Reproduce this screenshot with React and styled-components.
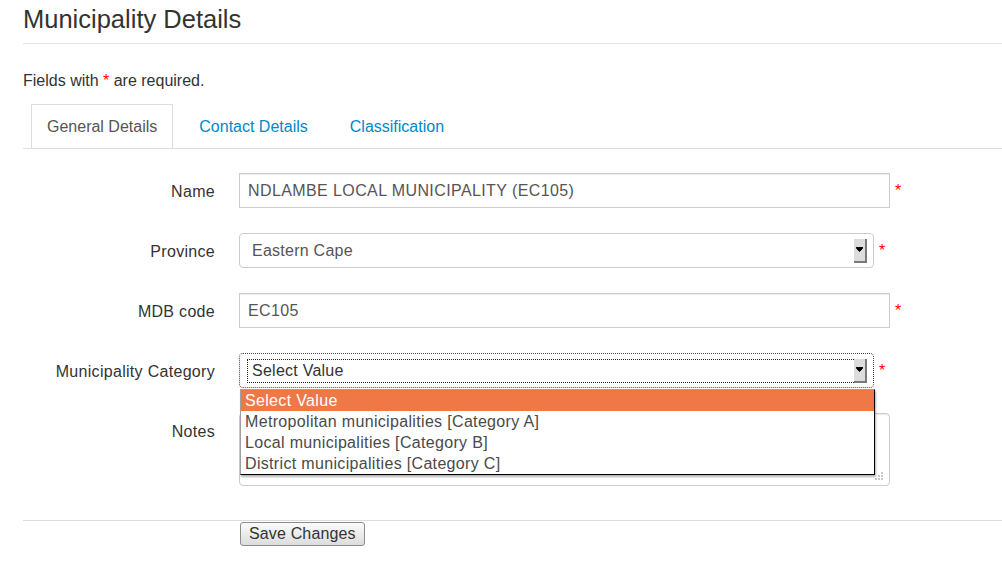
import React from "react";
import styled, { createGlobalStyle, css } from "styled-components";

const GlobalStyle = createGlobalStyle`
    body {
        margin: 0;
        background: #fff;
        color: #333;
        font-family: "Liberation Sans", Arial, sans-serif;
        font-size: 16px;
    }
`;

const Page = styled.div`
    padding-left: 23px;
`;

const Title = styled.h1`
    margin: 1px 0 0;
    padding-bottom: 6px;
    border-bottom: 1px solid #e5e5e5;
    font-size: 25.5px;
    font-weight: 400;
    line-height: 36px;
    color: #333;
`;

const Note = styled.p`
    margin: 27px 0 0;
    line-height: 20px;
`;

const Req = styled.span`
    color: #f00;
`;

const Tabs = styled.ul`
    display: flex;
    list-style: none;
    margin: 13px 0 0;
    padding: 0 0 0 8px;
    border-bottom: 1px solid #ddd;
`;

const Tab = styled.li`
    margin-right: 10px;
    padding: 12px 15px 11px;
    line-height: 20px;
    border: 1px solid transparent;
    border-bottom: 0;
    color: #0088cc;

    ${props => props.$active && css`
        border-color: #ddd;
        color: #555;
    `}
`;

const Form = styled.form`
    padding-top: 24px;
`;

const Fields = styled.div`
    display: flex;
    flex-direction: column;
    gap: 25px;
`;

const Row = styled.div`
    display: flex;
    align-items: flex-start;
`;

const Label = styled.label`
    flex-shrink: 0;
    box-sizing: border-box;
    width: 192px;
    height: 35px;
    margin-right: 24px;
    padding-top: 1px;
    text-align: right;
    line-height: 35px;
    letter-spacing: 0.3px;
    white-space: nowrap;
    color: #333;
`;

const Required = styled.span`
    margin-left: 5px;
    line-height: 35px;
    color: #f00;
`;

const TextInput = styled.input`
    box-sizing: border-box;
    width: 651px;
    height: 35px;
    padding: 0 8px;
    border: 1px solid #ccc;
    border-radius: 0;
    box-shadow: inset 0 1px 1px rgba(0, 0, 0, 0.075);
    font-family: inherit;
    font-size: 16px;
    letter-spacing: 0.4px;
    color: #555;
    outline: none;
`;

const SelectWrap = styled.div`
    position: relative;
`;

const SelectBox = styled.div`
    box-sizing: border-box;
    display: flex;
    align-items: center;
    width: 635px;
    height: 35px;
    padding-right: 6px;
    border: 1px solid #ccc;
    border-radius: 4px;

    ${props => props.$focused && css`
        border: 1px dotted #444;
    `}
`;

const SelectValue = styled.div`
    box-sizing: border-box;
    flex: 1;
    display: flex;
    align-items: center;
    height: 24px;
    margin-left: 7px;
    padding-left: 4px;
    border: 1px dotted transparent;
    letter-spacing: 0.25px;
    color: #555;

    ${props => props.$focused && css`
        border-color: #222;
        border-right: 0;
        color: #333;
    `}
`;

const ArrowButton = styled.span`
    box-sizing: border-box;
    display: flex;
    align-items: center;
    justify-content: center;
    width: 13px;
    height: 24px;
    background: #dcdcdc;
    border-right: 2px solid #7a7a7a;
    border-bottom: 2px solid #7a7a7a;
`;

const OptionList = styled.div`
    position: absolute;
    top: 36px;
    left: 1px;
    z-index: 5;
    box-sizing: border-box;
    width: 635px;
    background: #fff;
    border: 1px solid #a0a0a0;
    border-right-color: #000;
    border-bottom-color: #000;
    box-shadow: 1px 2px 2px rgba(0, 0, 0, 0.3);
`;

const Option = styled.div`
    height: 21px;
    padding-left: 4px;
    line-height: 21px;
    letter-spacing: 0.33px;
    color: #4a4a4a;

    ${props => props.$selected && css`
        background: #f07746;
        color: #fff;
    `}
`;

const TextArea = styled.div`
    position: relative;
    box-sizing: border-box;
    width: 651px;
    height: 73px;
    border: 1px solid #ccc;
    border-radius: 4px;
    box-shadow: inset 0 1px 1px rgba(0, 0, 0, 0.075);
`;

const Grip = styled.svg`
    position: absolute;
    right: 6px;
    bottom: 5px;
`;

const Actions = styled.div`
    margin-top: 34px;
    padding: 1px 0 0 217px;
    border-top: 1px solid #ddd;
`;

const Button = styled.button`
    box-sizing: border-box;
    width: 125px;
    height: 24px;
    padding: 0 0 0 8px;
    border: 1px solid #8c8c8c;
    border-radius: 3px;
    background: linear-gradient(#fbfbfb, #dcdcdc);
    font-family: inherit;
    font-size: 16px;
    text-align: left;
    letter-spacing: 0.15px;
    white-space: nowrap;
    color: #333;
`;

const Arrow = () => (
    <svg width="7" height="5" viewBox="0 0 7 5">
        <path d="M0 0.5h7M0.5 1.5h6L3.5 4.5z" stroke="#000" strokeWidth="1" fill="#000" />
    </svg>
);

const Select = ({ value, focused }) => (
    <SelectBox $focused={focused}>
        <SelectValue $focused={focused}>{value}</SelectValue>
        <ArrowButton><Arrow /></ArrowButton>
    </SelectBox>
);

const categories = [
    "Select Value",
    "Metropolitan municipalities [Category A]",
    "Local municipalities [Category B]",
    "District municipalities [Category C]",
];

const App = () => {
    return (
        <Page>
            <GlobalStyle />
            <Title>Municipality Details</Title>
            <Note>Fields with <Req>*</Req> are required.</Note>

            <Tabs>
                <Tab $active>General Details</Tab>
                <Tab>Contact Details</Tab>
                <Tab>Classification</Tab>
            </Tabs>

            <Form onSubmit={e => e.preventDefault()}>
                <Fields>
                    <Row>
                        <Label>Name</Label>
                        <TextInput readOnly value="NDLAMBE LOCAL MUNICIPALITY (EC105)" />
                        <Required>*</Required>
                    </Row>
                    <Row>
                        <Label>Province</Label>
                        <Select value="Eastern Cape" />
                        <Required>*</Required>
                    </Row>
                    <Row>
                        <Label>MDB code</Label>
                        <TextInput readOnly value="EC105" />
                        <Required>*</Required>
                    </Row>
                    <Row>
                        <Label>Municipality Category</Label>
                        <SelectWrap>
                            <Select value="Select Value" focused />
                            <OptionList>
                                {categories.map((c, i) => (
                                    <Option key={c} $selected={i === 0}>{c}</Option>
                                ))}
                            </OptionList>
                        </SelectWrap>
                        <Required>*</Required>
                    </Row>
                    <Row>
                        <Label>Notes</Label>
                        <TextArea>
                            <Grip width="9" height="9" viewBox="0 0 9 9">
                                <g fill="#c8c8c8">
                                    <rect x="7" y="1" width="2" height="2" />
                                    <rect x="4" y="4" width="2" height="2" />
                                    <rect x="7" y="4" width="2" height="2" />
                                    <rect x="1" y="7" width="2" height="2" />
                                    <rect x="4" y="7" width="2" height="2" />
                                    <rect x="7" y="7" width="2" height="2" />
                                </g>
                            </Grip>
                        </TextArea>
                    </Row>
                </Fields>

                <Actions>
                    <Button type="submit">Save Changes</Button>
                </Actions>
            </Form>
        </Page>
    );
};

export default App;
